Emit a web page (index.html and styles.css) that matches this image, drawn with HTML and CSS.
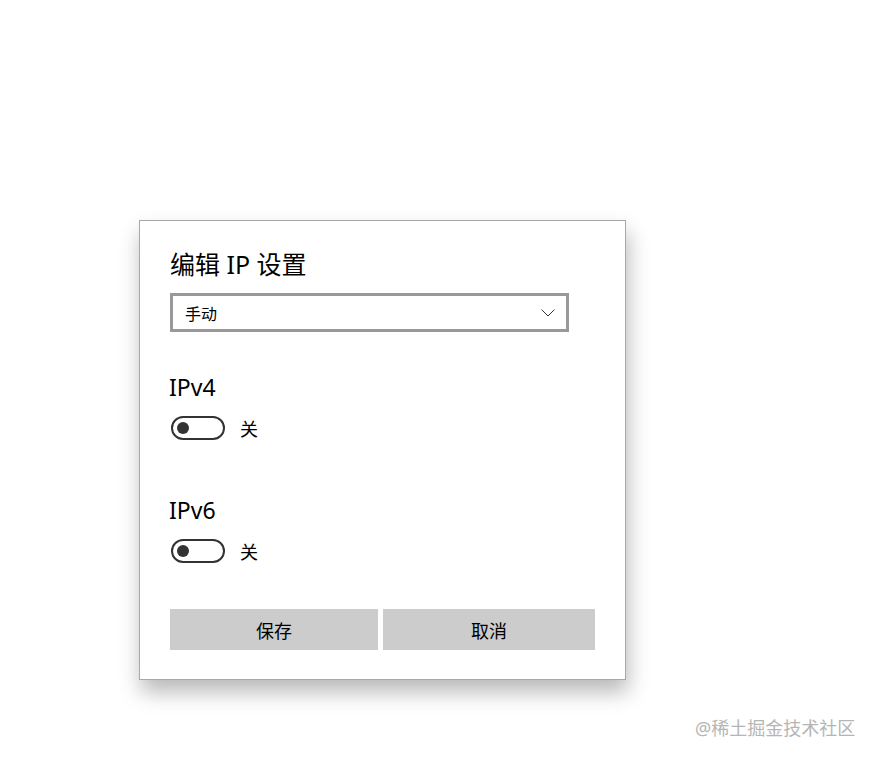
FILE: index.html
```html
<!DOCTYPE html>
<html lang="zh-CN">
<head>
    <meta charset="UTF-8">
    <meta name="viewport" content="width=device-width, initial-scale=1.0">
    <title>编辑 IP 设置</title>
    <link rel="stylesheet" href="styles.css">
</head>
<body>
    <div class="dialog">
        <h1 class="title">编辑 IP 设置</h1>
        <div class="select">
            <span>手动</span>
            <svg class="chevron" width="14" height="8" viewBox="0 0 14 8"><path d="M0.5 0.5 L7 7 L13.5 0.5" fill="none" stroke="#333" stroke-width="1"/></svg>
        </div>

        <h2 class="label">IPv4</h2>
        <div class="toggle-row">
            <div class="toggle"><span class="knob"></span></div>
            <span class="state">关</span>
        </div>

        <h2 class="label second">IPv6</h2>
        <div class="toggle-row">
            <div class="toggle"><span class="knob"></span></div>
            <span class="state">关</span>
        </div>

        <div class="buttons">
            <button class="btn save">保存</button>
            <button class="btn cancel">取消</button>
        </div>
    </div>

    <div class="watermark">@稀土掘金技术社区</div>
</body>
</html>
```

FILE: styles.css
```css
html, body { height: 100%; }
body { margin: 0; background: #fff; color: #000; font-family: "Noto Sans", "Noto Sans CJK SC", sans-serif; overflow: hidden; }
.dialog {
    width: 425px;
    margin: 220px 0 0 139px;
    padding: 27px 30px 29px 30px;
    background: #fff;
    border: 1px solid #a8a8a8;
    box-shadow: 2px 12px 20px rgba(0, 0, 0, 0.28);
}
.title { margin: 0; font-size: 25px; line-height: 32px; font-weight: normal; }
.select {
    width: 370px;
    height: 33px;
    margin-top: 13px;
    border: 3px solid #999;
    display: flex;
    align-items: center;
    justify-content: space-between;
    padding: 0 11px 0 12px;
    font-size: 16px;
}
.chevron { display: block; }
.label { margin: 40px 0 0 -1px; font-size: 23px; line-height: 30px; font-weight: normal; }
.label.second { margin-top: 55px; }
.toggle-row { display: flex; align-items: center; margin-top: 14px; height: 24px; }
.toggle {
    width: 46px;
    height: 20px;
    border: 2px solid #333;
    border-radius: 12px;
    display: flex;
    align-items: center;
    padding-left: 4px;
    margin-left: 1px;
}
.knob { width: 12px; height: 12px; border-radius: 50%; background: #333; }
.state { margin-left: 15px; font-size: 18px; }
.buttons { display: flex; gap: 5px; margin-top: 46px; }
.btn {
    height: 41px;
    border: none;
    background: #ccc;
    font-family: inherit;
    font-size: 18px;
    color: #000;
    padding: 0;
}
.save { width: 208px; }
.cancel { width: 212px; }
.watermark {
    position: absolute;
    left: 695px;
    top: 715px;
    font-size: 18px;
    line-height: 26px;
    color: #b5b5b5;
}
```
